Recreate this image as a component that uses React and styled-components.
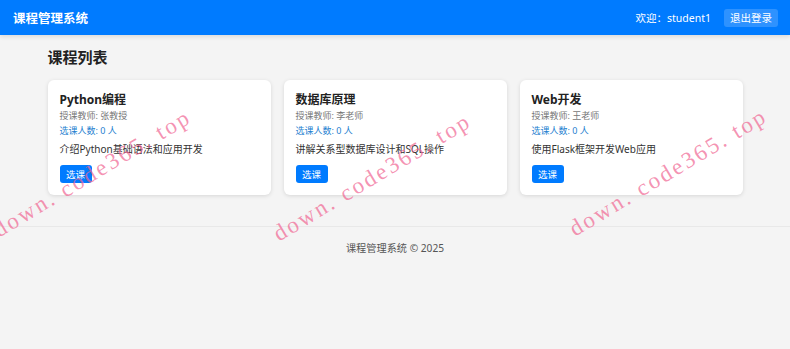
import React from 'react';
import styled, { createGlobalStyle } from 'styled-components';

const GlobalStyle = createGlobalStyle`
  body {
    margin: 0;
    background: #f4f4f4;
    font-family: "Segoe UI", "Noto Sans", "Noto Sans CJK SC", sans-serif;
    color: #333;
  }
`;

const Page = styled.div`
  position: relative;
  min-height: 349px;
  overflow: hidden;
`;

const Header = styled.header`
  height: 35px;
  background: #007bff;
  color: #fff;
  display: flex;
  align-items: center;
  justify-content: space-between;
  padding: 0 12px 0 13px;
  box-shadow: 0 2px 4px rgba(0, 0, 0, 0.1);
`;

const Brand = styled.div`
  font-size: 12.5px;
  font-weight: bold;
`;

const UserBox = styled.div`
  display: flex;
  align-items: center;
  gap: 13px;
  font-size: 10.5px;
`;

const LogoutButton = styled.button`
  background: rgba(255, 255, 255, 0.18);
  color: #fff;
  border: none;
  border-radius: 3px;
  padding: 0 6px;
  height: 18px;
  font-size: 10.5px;
  font-family: inherit;
  cursor: pointer;
`;

const Main = styled.main`
  width: 695px;
  margin: 0 auto;
  padding: 12px 0 31px;
`;

const Heading = styled.h2`
  margin: 0 0 12px;
  font-size: 15px;
  line-height: 21px;
  font-weight: bold;
  color: #222;
`;

const Grid = styled.div`
  display: grid;
  grid-template-columns: repeat(3, 1fr);
  gap: 13px;
`;

const Card = styled.div`
  background: #fff;
  border-radius: 6px;
  box-shadow: 0 1px 4px rgba(0, 0, 0, 0.12);
  padding: 12px;
  height: 115px;
  box-sizing: border-box;
`;

const CardTitle = styled.h3`
  margin: 0;
  font-size: 12px;
  font-weight: bold;
  color: #222;
  line-height: 16px;
`;

const Meta = styled.p`
  margin: 0;
  font-size: 9px;
  line-height: 15px;
  color: ${(p) => p.color || '#777'};
`;

const Desc = styled.p`
  margin: 3px 0 7px;
  font-size: 10px;
  line-height: 17px;
  color: #333;
`;

const SelectButton = styled.button`
  display: block;
  background: #007bff;
  color: #fff;
  border: none;
  border-radius: 3px;
  padding: 0;
  width: 32px;
  height: 18px;
  font-size: 9.5px;
  font-family: inherit;
  cursor: pointer;
`;

const Footer = styled.footer`
  border-top: 1px solid #e8e8e8;
  text-align: center;
  padding: 13px 0;
  font-size: 10.2px;
  color: #555;
`;

const Watermark = styled.div`
  position: absolute;
  left: ${(p) => p.x}px;
  top: ${(p) => p.y}px;
  transform: rotate(-31deg);
  transform-origin: left bottom;
  font-family: "Liberation Serif", serif;
  font-size: 23px;
  letter-spacing: 2.5px;
  color: rgba(240, 100, 145, 0.7);
  white-space: nowrap;
  pointer-events: none;
`;

const courses = [
  { title: 'Python编程', teacher: '张教授', desc: '介绍Python基础语法和应用开发' },
  { title: '数据库原理', teacher: '李老师', desc: '讲解关系型数据库设计和SQL操作' },
  { title: 'Web开发', teacher: '王老师', desc: '使用Flask框架开发Web应用' },
];

const App = () => {
  return (
    <Page>
      <GlobalStyle />
      <Header>
        <Brand>课程管理系统</Brand>
        <UserBox>
          <span>欢迎：student1</span>
          <LogoutButton>退出登录</LogoutButton>
        </UserBox>
      </Header>

      <Main>
        <Heading>课程列表</Heading>
        <Grid>
          {courses.map((c) => (
            <Card key={c.title}>
              <CardTitle>{c.title}</CardTitle>
              <Meta>授课教师: {c.teacher}</Meta>
              <Meta color="#1f7fd0">选课人数: 0 人</Meta>
              <Desc>{c.desc}</Desc>
              <SelectButton>选课</SelectButton>
            </Card>
          ))}
        </Grid>
      </Main>

      <Footer>课程管理系统 © 2025</Footer>

      <Watermark x={2} y={217}>down. code365. top</Watermark>
      <Watermark x={282} y={221}>down. code365. top</Watermark>
      <Watermark x={578} y={216}>down. code365. top</Watermark>
    </Page>
  );
};

export default App;
